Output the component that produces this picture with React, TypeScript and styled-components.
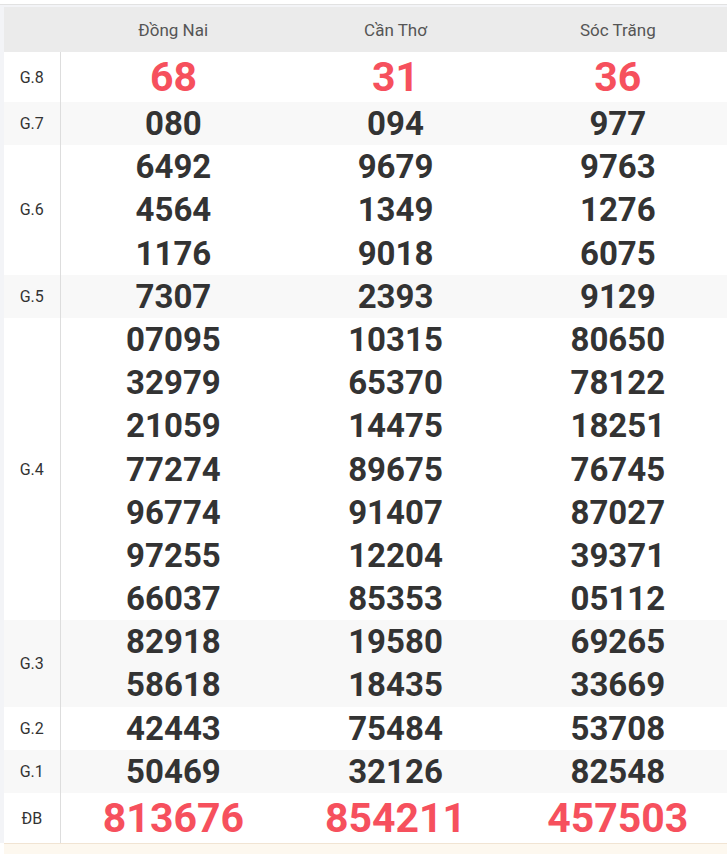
import React from "react";
import styled, { createGlobalStyle } from "styled-components";

const Global = createGlobalStyle`
  html, body { margin: 0; padding: 0; background: #ffffff; }
  body { font-family: Roboto, "Liberation Sans", Arial, sans-serif; }
`;

const Page = styled.div`
  padding-top: 4px;
  background: #ffffff;
`;

const Frame = styled.div`
  border-top: 1px solid #e2e2e2;
  padding-top: 2px;
  background: #f3f4f7;
  padding-left: 4px;
`;

const Table = styled.table`
  width: 100%;
  border-collapse: collapse;
  table-layout: fixed;
  background: #ffffff;
`;

const HeadRow = styled.tr`
  background: #ebebeb;
  height: 45px;
`;

const HeadCell = styled.th<{ $label?: boolean }>`
  width: ${(p) => (p.$label ? "56px" : "auto")};
  font-weight: 400;
  font-size: 17px;
  color: #555555;
  text-align: center;
  padding: ${(p) => (p.$label ? "0" : "0 0 0 4px")};
`;

const Row = styled.tr<{ $striped?: boolean }>`
  background: ${(p) => (p.$striped ? "#f8f8f8" : "#ffffff")};
`;

const LabelCell = styled.td`
  border-right: 1px solid #dddddd;
  font-size: 16px;
  color: #333333;
  text-align: center;
  vertical-align: middle;
  padding: 0;
`;

const NumCell = styled.td`
  text-align: center;
  vertical-align: middle;
  padding: 0 0 0 4px;
`;

const Num = styled.div<{ $big?: boolean }>`
  font-weight: 700;
  font-size: ${(p) => (p.$big ? "41px" : "33px")};
  line-height: ${(p) => (p.$big ? "50px" : "43.2px")};
  height: ${(p) => (p.$big ? "50px" : "43.2px")};
  color: ${(p) => (p.$big ? "#f6505d" : "#333333")};
`;

const Footer = styled.div`
  height: 12px;
  background: #fdf8ef;
  border-top: 1px solid #f1e4d3;
  margin-left: 4px;
`;

type Prize = { label: string; values: string[][]; big?: boolean };

const prizes: Prize[] = [
  { label: "G.8", values: [["68"], ["31"], ["36"]], big: true },
  { label: "G.7", values: [["080"], ["094"], ["977"]] },
  {
    label: "G.6",
    values: [
      ["6492", "4564", "1176"],
      ["9679", "1349", "9018"],
      ["9763", "1276", "6075"],
    ],
  },
  { label: "G.5", values: [["7307"], ["2393"], ["9129"]] },
  {
    label: "G.4",
    values: [
      ["07095", "32979", "21059", "77274", "96774", "97255", "66037"],
      ["10315", "65370", "14475", "89675", "91407", "12204", "85353"],
      ["80650", "78122", "18251", "76745", "87027", "39371", "05112"],
    ],
  },
  {
    label: "G.3",
    values: [
      ["82918", "58618"],
      ["19580", "18435"],
      ["69265", "33669"],
    ],
  },
  { label: "G.2", values: [["42443"], ["75484"], ["53708"]] },
  { label: "G.1", values: [["50469"], ["32126"], ["82548"]] },
  { label: "ĐB", values: [["813676"], ["854211"], ["457503"]], big: true },
];

const provinces = ["Đồng Nai", "Cần Thơ", "Sóc Trăng"];

export default function App() {
  return (
    <>
      <Global />
      <Page>
        <Frame>
          <Table>
            <thead>
              <HeadRow>
                <HeadCell $label />
                {provinces.map((p) => (
                  <HeadCell key={p}>{p}</HeadCell>
                ))}
              </HeadRow>
            </thead>
            <tbody>
              {prizes.map((pr, i) => (
                <Row key={pr.label} $striped={i % 2 === 1}>
                  <LabelCell>{pr.label}</LabelCell>
                  {pr.values.map((col, j) => (
                    <NumCell key={j}>
                      {col.map((v) => (
                        <Num key={v} $big={pr.big}>
                          {v}
                        </Num>
                      ))}
                    </NumCell>
                  ))}
                </Row>
              ))}
            </tbody>
          </Table>
        </Frame>
        <Footer />
      </Page>
    </>
  );
}
